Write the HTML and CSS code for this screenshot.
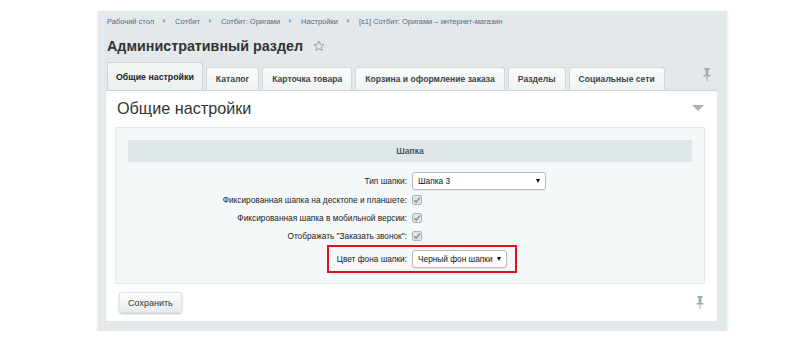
FILE: index.html
```html
<!DOCTYPE html>
<html lang="ru">
<head>
    <meta charset="UTF-8">
    <meta name="viewport" content="width=device-width, initial-scale=1.0">
    <title>Административный раздел</title>
    <link rel="stylesheet" href="styles.css">
</head>
<body>
    <div class="panel">
        <div class="breadcrumbs">
            <span>Рабочий стол</span><i class="crumb-arrow"></i>
            <span>Сотбит</span><i class="crumb-arrow"></i>
            <span>Сотбит: Оригами</span><i class="crumb-arrow"></i>
            <span>Настройки</span><i class="crumb-arrow"></i>
            <span>[s1] Сотбит: Оригами – интернет-магазин</span>
        </div>
        <div class="title">
            <h1>Административный раздел</h1>
            <svg class="star" width="12" height="12" viewBox="0 0 24 24">
                <polygon points="12,2 14.9,8.6 22,9.3 16.6,14 18.2,21 12,17.3 5.8,21 7.4,14 2,9.3 9.1,8.6" fill="none" stroke="#9aa5aa" stroke-width="2" stroke-linejoin="round"/>
            </svg>
        </div>
        <div class="tabs">
            <div class="tab active">Общие настройки</div>
            <div class="tab">Каталог</div>
            <div class="tab">Карточка товара</div>
            <div class="tab">Корзина и оформление заказа</div>
            <div class="tab">Разделы</div>
            <div class="tab">Социальные сети</div>
            <svg class="pin tabs-pin" width="8" height="13" viewBox="0 0 8 13">
                <rect x="1.5" y="0" width="5" height="2" fill="#a3adb1"/>
                <rect x="2.5" y="2" width="3" height="5" fill="#a3adb1"/>
                <rect x="0.5" y="7" width="7" height="1.5" fill="#a3adb1"/>
                <rect x="3.5" y="8.5" width="1" height="4.5" fill="#a3adb1"/>
            </svg>
        </div>
        <div class="box">
            <div class="box-head">
                <h2>Общие настройки</h2>
                <i class="collapse"></i>
            </div>
            <div class="settings">
                <div class="section">Шапка</div>
                <div class="row">
                    <div class="label">Тип шапки:</div>
                    <div class="field"><div class="select wide">Шапка 3</div></div>
                </div>
                <div class="row">
                    <div class="label">Фиксированная шапка на десктопе и планшете:</div>
                    <div class="field"><span class="check"><svg width="8" height="8" viewBox="0 0 8 8"><polyline points="1.2,4.2 3.2,6.2 6.8,1.6" fill="none" stroke="#7d898d" stroke-width="1.3"/></svg></span></div>
                </div>
                <div class="row">
                    <div class="label">Фиксированная шапка в мобильной версии:</div>
                    <div class="field"><span class="check"><svg width="8" height="8" viewBox="0 0 8 8"><polyline points="1.2,4.2 3.2,6.2 6.8,1.6" fill="none" stroke="#7d898d" stroke-width="1.3"/></svg></span></div>
                </div>
                <div class="row">
                    <div class="label">Отображать "Заказать звонок":</div>
                    <div class="field"><span class="check"><svg width="8" height="8" viewBox="0 0 8 8"><polyline points="1.2,4.2 3.2,6.2 6.8,1.6" fill="none" stroke="#7d898d" stroke-width="1.3"/></svg></span></div>
                </div>
                <div class="row marked">
                    <div class="mark"></div>
                    <div class="label">Цвет фона шапки:</div>
                    <div class="field"><div class="select">Черный фон шапки</div></div>
                </div>
            </div>
            <div class="box-foot">
                <button class="save">Сохранить</button>
                <svg class="pin" width="8" height="13" viewBox="0 0 8 13">
                    <rect x="1.5" y="0" width="5" height="2" fill="#a3adb1"/>
                    <rect x="2.5" y="2" width="3" height="5" fill="#a3adb1"/>
                    <rect x="0.5" y="7" width="7" height="1.5" fill="#a3adb1"/>
                    <rect x="3.5" y="8.5" width="1" height="4.5" fill="#a3adb1"/>
                </svg>
            </div>
        </div>
    </div>
</body>
</html>
```

FILE: styles.css
```css
body {
    margin: 0;
    background: #fff;
    font-family: "Liberation Sans", Arial, sans-serif;
    color: #000;
}
.panel {
    width: 611px;
    margin: 11px 0 0 98px;
    padding: 4px 10px 10px 8px;
    background: #e3e9eb;
    box-shadow: 0 1px 3px rgba(0, 0, 0, 0.12);
}
.breadcrumbs {
    display: flex;
    align-items: center;
    height: 12px;
    margin-left: 1px;
    font-size: 7.5px;
    color: #4f6a8e;
}
.crumb-arrow {
    width: 0;
    height: 0;
    margin: 0 9px;
    border-left: 3px solid #9aa5aa;
    border-top: 2.5px solid transparent;
    border-bottom: 2.5px solid transparent;
}
.title {
    display: flex;
    align-items: center;
    height: 26px;
    margin: 6px 0 0 1px;
}
.title h1 {
    margin: 0;
    font-size: 14.3px;
    font-weight: bold;
    color: #333;
}
.star {
    margin-left: 10px;
}
.tabs {
    display: flex;
    align-items: flex-end;
    height: 27px;
    margin-top: 4px;
    padding-left: 1px;
}
.tab {
    display: flex;
    align-items: center;
    height: 22px;
    margin-right: 3px;
    padding: 0 9px;
    font-size: 8.6px;
    font-weight: bold;
    color: #3e4447;
    background: linear-gradient(#fbfcfc, #f0f3f4);
    border: 1px solid #d2d9db;
    border-bottom: none;
    border-radius: 3px 3px 0 0;
}
.tab.active {
    height: 27px;
    padding: 0 8px;
    font-size: 8.8px;
    color: #222;
    background: linear-gradient(#f4f6f7, #eaeff0);
    border-color: #cdd5d8;
}
.tabs-pin {
    margin: 0 6px 9px auto;
}
.box {
    background: #fff;
    border-top: 1px solid #cdd5d8;
    padding: 0 12px 0 9px;
}
.box-head {
    display: flex;
    align-items: center;
    justify-content: space-between;
    height: 36px;
    padding-left: 2px;
}
.box-head h2 {
    margin: -2px 0 0;
    font-size: 16.2px;
    font-weight: normal;
    color: #333;
}
.collapse {
    width: 0;
    height: 0;
    margin: -2px 1px 0 0;
    border-top: 6px solid #a9b2b6;
    border-left: 6px solid transparent;
    border-right: 6px solid transparent;
}
.settings {
    background: #f5f8f9;
    border: 1px solid #e2e9eb;
    padding: 12px 12px 10px;
}
.section {
    height: 22px;
    line-height: 22px;
    text-align: center;
    font-size: 8.5px;
    font-weight: bold;
    color: #4b5356;
    background: #e0e7e9;
    margin-bottom: 9px;
}
.row {
    display: grid;
    grid-template-columns: 1fr 1fr;
    align-items: center;
    height: 18px;
    font-size: 8.3px;
}
.row:nth-child(2) {
    height: 20px;
}
.label {
    text-align: right;
    padding-right: 3px;
    color: #222;
}
.field {
    display: flex;
    align-items: center;
    padding-left: 2px;
}
.select {
    position: relative;
    box-sizing: border-box;
    width: 95px;
    height: 18px;
    line-height: 16px;
    padding: 0 5px;
    font-size: 8.3px;
    color: #111;
    background: #fff;
    border: 1px solid #b4bcbf;
    border-radius: 3px;
    box-shadow: 0 1px 1px rgba(0, 0, 0, 0.06);
}
.select::after {
    content: "";
    position: absolute;
    right: 5px;
    top: 6px;
    border-top: 4px solid #111;
    border-left: 2.5px solid transparent;
    border-right: 2.5px solid transparent;
}
.select.wide {
    width: 134px;
}
.check {
    display: flex;
    align-items: center;
    justify-content: center;
    box-sizing: border-box;
    width: 10px;
    height: 10px;
    background: #dfe5e7;
    border: 1px solid #abb6b9;
    border-radius: 2px;
}
.row.marked {
    position: relative;
    height: 28px;
}
.mark {
    position: absolute;
    top: 0;
    bottom: 0;
    left: calc(50% - 83px);
    width: 190px;
    box-sizing: border-box;
    border: 2px solid #e3101c;
}
.box-foot {
    display: flex;
    align-items: center;
    justify-content: space-between;
    height: 37px;
    padding: 0 1px 0 4px;
}
.save {
    height: 21px;
    padding: 0 9px;
    font-family: "Liberation Sans", Arial, sans-serif;
    font-size: 9px;
    color: #333;
    background: linear-gradient(#fff, #e4eaec);
    border: none;
    border-radius: 3px;
    box-shadow: 0 1px 2px rgba(0, 0, 0, 0.25), inset 0 0 0 1px #dde4e6;
    cursor: pointer;
}
```
